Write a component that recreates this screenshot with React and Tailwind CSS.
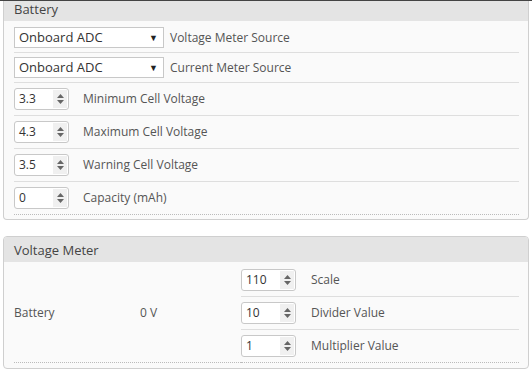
import React from "react";

const font = { fontFamily: '"Open Sans", "Liberation Sans", sans-serif' };

function Spinner({ value }) {
  return (
    <div className="flex h-[22px] w-[55px] items-stretch rounded-[3px] border border-[#c8c8c8] bg-white">
      <span className="flex-1 pl-[4px] text-[12px] leading-[20px] text-[#333]">{value}</span>
      <span className="flex w-[14px] flex-col items-center justify-center gap-[2px] bg-[#f0f0f0] my-[1px] mr-[1px]">
        <svg width="7" height="4" viewBox="0 0 7 4">
          <path d="M0 4L3.5 0L7 4Z" fill="#666" />
        </svg>
        <svg width="7" height="4" viewBox="0 0 7 4">
          <path d="M0 0L3.5 4L7 0Z" fill="#666" />
        </svg>
      </span>
    </div>
  );
}

function Select({ value }) {
  return (
    <div className="flex h-[21px] w-[150px] items-center justify-between border border-[#c8c8c8] bg-white pl-[4px] pr-[5px] text-[13px] text-[#333]">
      <span>{value}</span>
      <span className="text-[9px] text-[#222]">▼</span>
    </div>
  );
}

function Row({ children, last }) {
  return (
    <div
      className={`flex items-center ${
        last ? "border-b border-dotted border-[#bbb]" : "border-b border-[#dedede]"
      }`}
    >
      {children}
    </div>
  );
}

export default function App() {
  const selects = [
    ["Onboard ADC", "Voltage Meter Source"],
    ["Onboard ADC", "Current Meter Source"],
  ];
  const nums = [
    ["3.3", "Minimum Cell Voltage"],
    ["4.3", "Maximum Cell Voltage"],
    ["3.5", "Warning Cell Voltage"],
    ["0", "Capacity (mAh)"],
  ];
  const meter = [
    ["110", "Scale"],
    ["10", "Divider Value"],
    ["1", "Multiplier Value"],
  ];

  return (
    <div className="h-[371px] w-[532px] overflow-hidden bg-white" style={font}>
      <div className="border-t border-[#444]">
        <div className="mx-[3px] rounded-b-[4px] border-x border-b border-[#cfcfcf] bg-[#fafafa]">
          <div className="flex h-[20px] items-center bg-[#e4e4e4] pl-[10px] pb-[3px] text-[13px] text-[#444]">
            Battery
          </div>
          <div className="pl-[10px] pr-[9px] pt-[2px] pb-[4px]">
            {selects.map(([v, l]) => (
              <Row key={l}>
                <div className="flex h-[29px] items-center">
                  <Select value={v} />
                  <span className="ml-[6px] text-[12px] text-[#555]">{l}</span>
                </div>
              </Row>
            ))}
            {nums.map(([v, l], i) => (
              <Row key={l} last={i === nums.length - 1}>
                <div className="flex h-[32px] items-center">
                  <Spinner value={v} />
                  <span className="ml-[14px] text-[12px] text-[#555]">{l}</span>
                </div>
              </Row>
            ))}
          </div>
        </div>

        <div className="mx-[3px] mt-[16px] overflow-hidden rounded-[4px] border border-[#cfcfcf] bg-[#fafafa]">
          <div className="h-[25px] bg-[#e4e4e4] pl-[10px] text-[13px] leading-[26px] text-[#444]">
            Voltage Meter
          </div>
          <div className="flex pl-[10px] pr-[9px] pt-[2px] pb-[5px]">
            <div className="flex w-[227px] items-center border-b border-dotted border-[#bbb] text-[12px] text-[#555]">
              <span className="w-[126px]">Battery</span>
              <span>0 V</span>
            </div>
            <div className="flex-1">
              {meter.map(([v, l], i) => (
                <Row key={l} last={i === meter.length - 1}>
                  <div className="flex h-[32px] items-center">
                    <Spinner value={v} />
                    <span className="ml-[15px] text-[12px] text-[#555]">{l}</span>
                  </div>
                </Row>
              ))}
            </div>
          </div>
        </div>
      </div>
    </div>
  );
}
